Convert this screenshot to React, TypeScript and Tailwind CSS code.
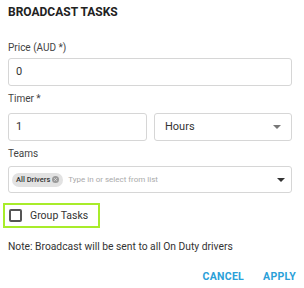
const Caret = ({ dark }: { dark?: boolean }) => (
  <svg width="8" height="4" viewBox="0 0 8 4" className={dark ? "fill-[#333]" : "fill-[#777]"}>
    <path d="M0 0h8L4 4z" />
  </svg>
);

const App = () => {
  return (
    <div className="w-[304px] h-[288px] bg-white font-['Roboto',sans-serif] text-[#333]">
      <div className="px-2 pt-[5px]">
        <h2 className="text-[12px] font-bold text-[#222] leading-[14px]">BROADCAST TASKS</h2>

        <div className="mt-[22px] text-[10px] leading-[14px] text-[#444]">Price (AUD *)</div>
        <div className="mt-[3px] h-[28px] w-[284px] border border-[#d6d6d6] rounded-[3px] flex items-center px-[7px] text-[11px]">
          0
        </div>

        <div className="mt-[6px] text-[10px] leading-[14px] text-[#444]">Timer *</div>
        <div className="mt-[7px] flex gap-[7px] w-[284px]">
          <div className="h-[28px] w-[139px] border border-[#d6d6d6] rounded-[3px] flex items-center px-[7px] text-[11px]">
            1
          </div>
          <div className="h-[28px] flex-1 border border-[#d6d6d6] rounded-[3px] flex items-center justify-between pl-[10px] pr-[10px] text-[11px]">
            <span>Hours</span>
            <Caret />
          </div>
        </div>

        <div className="mt-[6px] text-[10px] leading-[14px] text-[#444]">Teams</div>
        <div className="mt-[5px] h-[27px] w-[284px] border border-[#d6d6d6] rounded-[3px] flex items-center pl-[3px] pr-[6px]">
          <span className="flex items-center gap-[2px] h-[14px] rounded-full bg-[#e2e2e2] px-[4px] text-[7.5px] font-medium text-[#333]">
            All Drivers
            <svg width="7" height="7" viewBox="0 0 10 10">
              <circle cx="5" cy="5" r="5" fill="#9a9a9a" />
              <path d="M3.2 3.2l3.6 3.6M6.8 3.2L3.2 6.8" stroke="#e2e2e2" strokeWidth="1.2" />
            </svg>
          </span>
          <span className="ml-[5px] text-[8px] text-[#aaa] flex-1">Type in or select from list</span>
          <Caret dark />
        </div>
      </div>

      <div className="mt-[10px] ml-[3px] w-[97px] h-[25px] border-2 border-[#a8ec2a] flex items-center pl-[4px] gap-[8px]">
        <span className="w-[13px] h-[13px] border-2 border-[#555] rounded-[2px]" />
        <span className="text-[10.5px] text-[#333]">Group Tasks</span>
      </div>

      <div className="px-2 mt-[12px] text-[10.3px] leading-[14px] text-[#333]">
        Note: Broadcast will be sent to all On Duty drivers
      </div>

      <div className="mt-[16px] flex justify-end gap-[19px] pr-[8px] text-[10.5px] leading-[14px] font-bold text-[#2aa0d8] tracking-[0.3px]">
        <span>CANCEL</span>
        <span>APPLY</span>
      </div>
    </div>
  );
};

export default App;
